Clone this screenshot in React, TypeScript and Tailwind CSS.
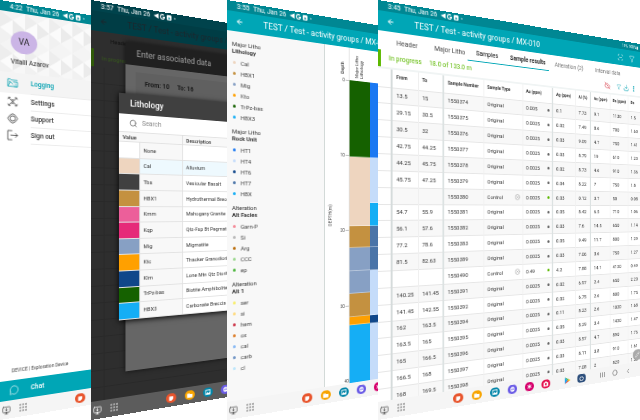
import React from 'react';
import {
  ArrowLeft, ChevronLeft, Circle, CloudOff, Download, Filter, MessageCircle,
  MonitorDown, MoreVertical, Pencil, Search, ScanLine, CircleX,
} from 'lucide-react';

type Tone = 'light' | 'dark';

function StatusBar({ time, tone = 'light' }: { time: string; tone?: Tone }) {
  return (
    <div className={`flex h-[10px] shrink-0 items-center pl-[10px] text-[7px] leading-[10px] text-white ${tone === 'dark' ? 'bg-[#00434c]' : 'bg-[#008793]'}`}>
      <span className="w-[17px]">{time}</span>
      <span className="mr-[4px] whitespace-nowrap">Thu, Jan 26</span>
      <svg viewBox="0 0 28 8" className="h-[8px] w-[26px] shrink-0" fill="#fff">
        <path d="M0 4 6 1v6z" />
        <path d="M12.500 2.200A2.600 2.600 0 1 0 13.300 4.400H11" fill="none" stroke="#fff" strokeWidth="1.300" />
        <rect x="16" y="1" width="6" height="6" rx="1" />
        <path d="M17.500 5.500 19 3l1.500 2.500z" fill="#008793" />
        <circle cx="26" cy="4" r=".8" />
      </svg>
    </div>
  );
}

function AppBar({ tone = 'light', children }: { tone?: Tone; children?: React.ReactNode }) {
  return (
    <header className={`flex h-5 shrink-0 items-center pr-[13px] ${tone === 'dark' ? 'bg-[#003d45] text-[#1d262c]' : 'bg-[#00a6b6] text-white'}`}>
      <button aria-label="Back" className="flex w-[38px] shrink-0 pl-[9px]">
        <ArrowLeft className="h-[8px] w-[8px]" strokeWidth={3} />
      </button>
      <h1 className="text-[9px] leading-5 whitespace-nowrap">TEST / Test - activity groups / MX-010</h1>
      {children}
    </header>
  );
}

const apps = [
  { name: 'Notes', color: 'bg-[#e8552d]', glyph: <path d="M4 3h5v3L7 8H4z" /> },
  { name: 'Files', color: 'bg-[#f7a400]', glyph: <path d="M3 3h3l1 1h3v4H3z" /> },
  { name: 'Gallery', color: 'bg-[#0084a8]', glyph: <path fillRule="evenodd" d="M3 2h7v6H3zM4 3v4l2-2 1 1 2-1V3z" /> },
  { name: 'Internet', color: 'bg-[#6a5be6]', glyph: <path fillRule="evenodd" d="M6.500 2a3 3 0 1 1 0 6 3 3 0 0 1 0-6zM4 4.500h5v1H4z" /> },
  { name: 'Flower', color: 'bg-[#d6006c]', glyph: <path d="M6 2h1v2l2-1 .500 1-2 1 2 1-.500 1-2-1v2H6V6L4 7l-.500-1 2-1-2-1L4 3l2 1z" /> },
  { name: 'Camera', color: 'bg-[#e4104e]', glyph: <path fillRule="evenodd" d="M3 3h2l.500-1h2L8 3h2v5H3zM6.500 4a1.300 1.300 0 1 0 0 2.600 1.300 1.300 0 0 0 0-2.600z" /> },
];

function NavBar({ tone = 'light' }: { tone?: Tone }) {
  return (
    <nav aria-label="System" className={`flex h-[18px] shrink-0 items-center pl-[2px] ${tone === 'dark' ? 'bg-[#5c5c5c] text-white' : 'bg-[#f5f5f5] text-[#555]'}`}>
      <button aria-label="Cast" className="w-[18px] shrink-0"><MonitorDown className="h-[9px] w-[9px]" strokeWidth={2} /></button>
      <button aria-label="All apps" className="w-[56px] shrink-0">
        <svg viewBox="0 0 8 8" className="h-[8px] w-[8px]" fill="currentColor">
          {[1, 4, 7].map((y) => [1, 4, 7].map((x) => <circle key={`${x}${y}`} cx={x} cy={y} r=".8" />))}
        </svg>
      </button>
      {apps.map((a) => (
        <div key={a.name} className="flex w-[22px] shrink-0 justify-center">
          <button aria-label={a.name} className={`h-[10px] w-[12px] rounded-[5px] ${a.color}`}>
            <svg viewBox="0 0 13 10" className="h-[10px] w-[12px]" fill="#fff">{a.glyph}</svg>
          </button>
        </div>
      ))}
      <button aria-label="Play Store" className="ml-[8px] flex w-[20px] shrink-0 justify-center">
        <svg viewBox="0 0 10 10" className="h-[10px] w-[10px]">
          <path d="M2 1v8l4-4z" fill="#20a6f5" /><path d="M2 1l6 3-2 1z" fill="#2fb457" />
          <path d="M2 9l6-3-2-1z" fill="#ea4335" /><path d="M7.500 3.700 10 5 7.500 6.300 6 5z" fill="#fbbc04" />
        </svg>
      </button>
      <button aria-label="Settings" className="flex w-[22px] shrink-0 justify-center">
        <span className="flex h-[10px] w-[12px] items-center justify-center rounded-[4px] bg-[#2d4f7c]">
          <span className="h-[5px] w-[6px] rounded-full border-[1px] border-white" />
        </span>
      </button>
      <button aria-label="Recents" className="ml-[9px] flex w-[20px] shrink-0 justify-center gap-[2px]">
        <i className="h-[6px] w-px bg-current" /><i className="h-[6px] w-px bg-current" /><i className="h-[6px] w-px bg-current" />
      </button>
      <button aria-label="Home" className="flex w-[20px] shrink-0 justify-center"><Circle className="h-[8px] w-[8px]" /></button>
      <button aria-label="Go back" className="flex w-[20px] shrink-0 justify-center"><ChevronLeft className="h-[9px] w-[9px]" /></button>
    </nav>
  );
}

/* A tablet screen that recedes to the right, clipped by its own column. */
function Tablet({ label, className, children }: { label: string; className: string; children: React.ReactNode }) {
  return (
    <section aria-label={label} className="h-full min-w-0 overflow-hidden bg-white perspective-[220px] perspective-origin-left">
      <div className={`relative flex h-full origin-left rotate-y-10 flex-col overflow-hidden ${className}`}>{children}</div>
    </section>
  );
}

const menu = [
  { label: 'Logging', active: true, icon: <path d="M1 10V2h3l1 1h7M1 10h11M1 10l3-5 3 3M7 5h5v5H8M9 7.500h1.500M3 4v2" /> },
  { label: 'Settings', active: false, icon: <path d="M2 2l9 8M11 2l-9 8M1 3.500 2 1.500l2 0M9 1.500h2l1 2M1 8.500l1 2h2M9 10.500h2l1-2M5 3.500l1.500 1L8 3.500M5 8.500l1.500-1L8 8.500" /> },
  { label: 'Support', active: false, icon: <path d="M6.500 3.200a3 2.800 0 1 0 0 5.600 3 2.800 0 0 0 0-5.600zM3.500 2.500 6.500.8l3 1.700L12.200 6 9.500 9.500l-3 1.700-3-1.700L.8 6z" /> },
  { label: 'Sign out', active: false, icon: <path d="M6 1H1v10h5M4 6h8M9.500 3.500 12 6 9.500 8.500" /> },
];

function MenuScreen() {
  return (
    <Tablet label="Menu" className="w-[130%] bg-white">
      <StatusBar time="4:22" />
      <div className="relative h-[61px] shrink-0 overflow-hidden bg-[#f4f4f4]">
        <svg aria-hidden="true" viewBox="0 0 120 61" preserveAspectRatio="xMinYMin slice" className="absolute inset-0 h-full w-full">
          <defs>
            <pattern id="cubes" width="26" height="34" patternUnits="userSpaceOnUse">
              <path d="M0 0 13 8 0 17z" fill="#ededed" /><path d="M26 0v17L13 8z" fill="#fafafa" />
              <path d="M0 17 13 8v17z" fill="#fbfbfb" /><path d="M13 25V8l13 9z" fill="#ebebeb" />
              <path d="M0 17l13 8L0 34z" fill="#f1f1f1" /><path d="M13 25l13 9V17z" fill="#f7f7f7" />
            </pattern>
          </defs>
          <rect width="120" height="61" fill="url(#cubes)" />
        </svg>
        <div className="relative pt-[18px] pl-[11px]">
          <div className="flex h-[23px] w-[28px] items-center justify-center rounded-[50%] bg-[#cbb5e6] text-[9px] text-[#222]">VA</div>
          <p className="text-[7px] leading-[18px] whitespace-nowrap text-[#222]">Vitalii Azarov</p>
        </div>
      </div>
      <ul>
        {menu.map(({ label, icon, active }) => (
          <li key={label} className={active ? 'bg-[#f4f4f4]' : ''}>
            <a href={`#${label}`} className={`flex items-center pl-[7px] text-[7px] font-medium ${active ? 'h-[21px] text-[#00a0b0]' : 'h-[17px] text-[#333]'}`}>
              <svg aria-hidden="true" viewBox="0 0 13 12" className="h-[11px] w-[12px]" fill="none" stroke="currentColor" strokeWidth=".8">{icon}</svg>
              <span className="ml-[13px] flex h-full flex-1 items-center border-b border-[#ececec]">{label}</span>
            </a>
          </li>
        ))}
      </ul>
      <p className="mt-auto pb-[6px] pl-[12px] text-[5px] leading-[8px] whitespace-nowrap text-[#444]">DEVICE | Exploration Device</p>
      <button className="flex h-[20px] shrink-0 items-center bg-[#00a6b6] pl-[9px] text-[7px] font-medium text-white">
        <MessageCircle className="mr-[12px] h-[10px] w-[11px]" strokeWidth={1.5} />Chat
      </button>
      <NavBar />
    </Tablet>
  );
}

const lithology = [
  ['bg-white', 'None', ''],
  ['bg-[#eed5bf]', 'Cal', 'Alluvium'],
  ['bg-[#404040]', 'Tbs', 'Vesicular Basalt'],
  ['bg-[#c49140]', 'HBX1', 'Hydrothermal Breccia'],
  ['bg-[#ec5f9a]', 'Kmm', 'Mahogany Granite'],
  ['bg-[#e62a79]', 'Kqp', 'Qtz-Fsp Bt Pegmatite'],
  ['bg-[#87a0c4]', 'Mig', 'Migmatite'],
  ['bg-[#ffa000]', 'Ktc', 'Thacker Granodiorite'],
  ['bg-[#10478a]', 'Klm', 'Lone Mtn Qtz Diorite'],
  ['bg-[#156100]', 'TrPz-bas', 'Biotite Amphibolite'],
  ['bg-[#15aef5]', 'HBX3', 'Carbonate Breccia'],
];

function PickerScreen() {
  return (
    <Tablet label="Lithology picker" className="w-[130%] bg-[#2e2e2e]">
      <StatusBar time="3:57" tone="dark" />
      <AppBar tone="dark" />
      <div className="relative min-h-0 flex-1 overflow-hidden">
        <p className="pl-[20px] text-[6px] leading-[18px] text-[#111]">Header</p>
        <p className="border-l-[3px] border-[#2f5a08] pl-[8px] text-[6px] leading-[18px] text-[#375a1c]">In progress</p>
        <div aria-hidden="true" className="grid h-full grid-cols-[14px_1fr] grid-rows-[repeat(20,17px)] *:border-r *:border-b *:border-[#292929]">
          {Array.from({ length: 40 }, (_, i) => <i key={i} />)}
        </div>
        <div role="dialog" aria-label="Enter associated data" className="absolute top-[7px] right-0 bottom-[26px] left-[36px] bg-[#666] text-[#bbb] shadow-[0_0_5px_#111]">
          <h2 className="h-[23px] bg-[#202020] pl-[12px] text-[9px] leading-[23px] whitespace-nowrap text-[#a5a5a5]">Enter associated data</h2>
          <p className="mt-[7px] ml-[11px] flex h-[24px] items-center gap-[9px] bg-[#606060] pl-[10px] text-[7px] font-bold text-[#181818]">
            <span>From: 10</span><span>To: 16</span>
          </p>
        </div>
        <div role="dialog" aria-label="Lithology" className="absolute top-[60px] right-0 left-[29px] bg-white text-[#333] shadow-[0_1px_6px_#000]">
          <h2 className="h-[21px] bg-[#404040] pl-[12px] text-[9px] leading-[21px] font-medium text-white">Lithology</h2>
          <label className="flex h-[18px] items-center pl-[11px]">
            <Search className="mr-[5px] h-[9px] w-[9px] text-[#333]" strokeWidth={1.5} />
            <input aria-label="Search" placeholder="Search" className="w-[80px] text-[7px] outline-none placeholder:text-[#888]" />
          </label>
          <table className="h-[194px] w-full table-fixed border-collapse text-left text-[6px] leading-[8px] whitespace-nowrap">
            <colgroup><col className="w-[22px]" /><col className="w-[49px]" /><col /></colgroup>
            <thead>
              <tr className="h-[10px] border-y border-[#e3e3e3] bg-[#f8f8f8]">
                <th colSpan={2} className="border-r border-[#ddd] pl-[4px] font-medium">Value</th>
                <th className="pl-[4px] font-medium">Description</th>
              </tr>
            </thead>
            <tbody>
              {lithology.map(([color, code, text]) => (
                <tr key={code} className={`border-b border-[#e3e3e3] ${code === 'Cal' ? 'bg-[#eef9fe]' : 'bg-white'}`}>
                  <td className={color} />
                  <td className={`border-x border-[#e0e0e0] pl-[4px] ${code === 'Cal' ? '' : 'bg-[#f8f8f8]'}`}>{code}</td>
                  <td className="pl-[4px]">{text}</td>
                </tr>
              ))}
            </tbody>
          </table>
        </div>
      </div>
      <NavBar tone="dark" />
    </Tablet>
  );
}

const legend = [
  { top: 'Major Litho', title: 'Lithology', items: [['Cal', 'bg-[#eed5bf]'], ['HBX1', 'bg-[#c49140]'], ['Mig', 'bg-[#87a0c4]'], ['Kto', 'bg-[#ffa000]'], ['TrPz-bas', 'bg-[#156100]'], ['HBX3', 'bg-[#15aef5]']] },
  { top: 'Major Litho', title: 'Rock Unit', items: [['HT1', 'bg-[#1a78f2]'], ['HT4', 'bg-[#c5dcfa]'], ['HT6', 'bg-[#10478a]'], ['HT7', 'bg-[#4a74a8]'], ['HBX', 'bg-[#15aef5]']] },
  { top: 'Alteration', title: 'Alt Facies', items: [['Garn-P', 'bg-[#f48a98]'], ['Si', 'bg-[#b8b8b8]'], ['Arg', 'bg-[#b96b08]'], ['CCC', 'bg-[#99d68c]'], ['ep', 'bg-[#4ab53a]']] },
  { top: 'Alteration', title: 'Alt 1', items: [['ser', 'bg-[#f8ee68]'], ['si', 'bg-[#ffd97a]'], ['hem', 'bg-[#cc3044]'], ['ox', 'bg-[#dc7b24]'], ['cal', 'bg-[#86b8f4]'], ['carb', 'bg-[#7094c4]'], ['cl', 'bg-[#bde6fb]']] },
];

function LogScreen() {
  return (
    <Tablet label="Lithology log" className="w-[135%] bg-white">
      <StatusBar time="3:55" />
      <AppBar />
      <div className="flex min-h-0 flex-1">
        <aside className="flex w-[108px] shrink-0 flex-col gap-[5px] border-r border-[#cfd6d4] bg-[#f8f8f8] pt-[9px] pl-[5px] text-[#333]">
          {legend.map((g) => (
            <section key={g.title}>
              <h2 className="mb-[3px] text-[6px] leading-[7px]"><span className="block">{g.top}</span><span className="block font-bold">{g.title}</span></h2>
              <ul>
                {g.items.map(([name, color]) => (
                  <li key={name} className="flex h-[11px] items-center gap-[5px] pl-px text-[6px] text-[#444]">
                    <i className={`h-[3px] w-[3px] rounded-full ${color}`} />{name}
                  </li>
                ))}
              </ul>
            </section>
          ))}
        </aside>
        <div className="flex w-[30px] shrink-0 border-r border-[#ddd] text-[5px] text-[#444]">
          <span className="w-[12px] rotate-180 self-center pr-[2px] leading-[8px] [writing-mode:vertical-rl]">DEPTH(m)</span>
          <div className="flex flex-1 flex-col items-end">
            <span className="mr-[4px] h-[34px] rotate-180 pt-[4px] text-[5px] leading-[7px] font-medium [writing-mode:vertical-rl]">Depth</span>
            {['0', '10', '20', '30'].map((t) => (
              <span key={t} className="flex h-[84px] w-full items-start justify-end leading-[5px]">{t}<i className="mt-[2px] ml-px h-px w-[4px] bg-[#bbb]" /></span>
            ))}
            <span className="leading-[5px]">40</span>
          </div>
        </div>
        <div className="flex min-w-0 flex-1 flex-col">
          <div className="flex h-[36px] shrink-0 items-end pb-[3px] pl-[6px]">
            <span className="rotate-180 text-[5px] leading-[6px] text-[#333] [writing-mode:vertical-rl]">Major Litho<br />Lithology</span>
          </div>
          <div className="flex min-h-0 flex-1">
            <div className="flex w-[26px] flex-col divide-y divide-white/40">
              <i className="h-[85px] bg-[#156100]" />
              <i className="h-[77px] bg-[#eed5bf]" />
              <i className="h-[24px] bg-[#c49140]" />
              <i className="h-[26px] bg-[#87a0c4]" />
              <i className="h-[25px] bg-[#87a0c4]" />
              <i className="h-[26px] bg-[#c49140]" />
              <i className="h-[9px] bg-[#ffa000]" />
              <i className="flex-1 bg-[#15aef5]" />
            </div>
            <div className="flex flex-1 flex-col divide-y divide-white/40">
              <i className="h-[85px] bg-[#1a78f2]" />
              <i className="h-[51px] bg-[#c5dcfa]" />
              <i className="h-[26px] bg-[#15aef5]" />
              <i className="h-[24px] bg-[#4a74a8]" />
              <i className="h-[26px] bg-[#4a74a8]" />
              <i className="h-[51px] bg-[#c5dcfa]" />
              <i className="h-[9px] bg-[#10478a]" />
              <i className="flex-1 bg-[#c5dcfa]" />
            </div>
          </div>
        </div>
      </div>
      <NavBar />
    </Tablet>
  );
}

const tabs = [
  ['Header', 'w-[41px] pl-[1px] text-[#444]'],
  ['Major Litho', 'w-[39px] pl-[1px] text-[#444]'],
  ['Samples', 'w-[47px] border-b border-[#00a6b6] pl-[10px]'],
  ['Sample results', 'w-[56px] border-b border-[#00a6b6] pl-[5px] font-medium'],
  ['Alteration  (2)', 'w-[66px] pl-[8px] text-[#777]'],
  ['Interval data', 'flex-1 text-[#777]'],
];

const samples = [
  ['13.5', '15', '1550374', 'Original', '0.005', '0.1', '7.73', '9.1', '1130', '1.5'],
  ['29.15', '30.5', '1550375', 'Original', '0.0025', '0.02', '7.49', '8.6', '700', '1.60'],
  ['30.5', '32', '1550376', 'Original', '0.0025', '0.03', '9.09', '4.7', '750', '1.41'],
  ['42.75', '44.25', '1550377', 'Original', '0.0025', '0.03', '8.79', '19', '610', '1.23'],
  ['44.25', '45.75', '1550378', 'Original', '0.0025', '0.02', '8.73', '4.6', '910', '1.36'],
  ['45.75', '47.25', '1550379', 'Original', '0.0025', '0.04', '8.22', '7', '750', '1.8'],
  ['', '', '1550380', 'Control', '0.0025', '0.03', '0.12', '3.7', '50', '0.08'],
  ['54.7', '55.9', '1550381', 'Original', '0.0025', '0.05', '8.42', '6.5', '710', '1.06'],
  ['56.1', '57.6', '1550382', 'Original', '0.0025', '0.03', '7.6', '14.5', '650', '1.14'],
  ['77.2', '78.6', '1550383', 'Original', '0.0025', '0.05', '9.49', '11.7', '800', '1.29'],
  ['81.5', '82.63', '1550389', 'Original', '0.0025', '0.03', '7.06', '3.6', '750', '1.27'],
  ['', '', '1550490', 'Control', '0.49', '4.2', '7.88', '14.1', '4120', '0.49'],
  ['140.25', '141.45', '1550391', 'Original', '0.0025', '0.02', '6.97', '2.4', '650', '2.20'],
  ['141.45', '142.55', '1550392', 'Original', '0.0025', '0.02', '6.75', '2.6', '800', '1.75'],
  ['162', '163.5', '1550394', 'Original', '0.0025', '0.11', '8.23', '2.6', '1020', '1.68'],
  ['163.5', '165', '1550395', 'Original', '0.0025', '0.05', '8.29', '3.4', '1420', '1.47'],
  ['165', '166.5', '1550396', 'Original', '0.0025', '0.03', '8.57', '4.7', '890', '1.76'],
  ['166.5', '168', '1550397', 'Original', '0.0025', '0.03', '8.11', '3.8', '910', '1.61'],
  ['168', '169.5', '1550398', 'Original', '0.0025', '0.03', '7.08', '2', '820', '1.52'],
];

const heads = ['From', 'To', 'Sample Number', 'Sample Type', 'Au (ppm)', 'Ag (ppm)', 'Al (%)', 'As (ppm)', 'Ba (ppm)', 'Be'];

function SamplesScreen() {
  return (
    <Tablet label="Samples" className="w-[130%] bg-white">
      <div className="flex shrink-0 bg-[#008793]">
        <div className="flex-1"><StatusBar time="3:45" /></div>
        <span className="pr-[7px] text-[5px] leading-[10px] text-white">19% 100%▮</span>
      </div>
      <AppBar>
        <button aria-label="Scan" className="ml-auto"><ScanLine className="h-[9px] w-[9px]" strokeWidth={1.5} /></button>
        <button aria-label="Filter" className="ml-[9px]"><Filter className="h-[9px] w-[9px]" strokeWidth={1.5} /></button>
      </AppBar>
      <div role="tablist" className="flex h-[19px] shrink-0 pl-[18px]">
        {tabs.map(([name, cls]) => (
          <button key={name} role="tab" className={`shrink-0 pt-[3px] text-left text-[7px] whitespace-nowrap ${cls}`}>{name}</button>
        ))}
      </div>
      <div className="flex h-[19px] shrink-0 items-center border-b-2 border-[#f0f4f4] text-[#5cb800]">
        <i className="mr-[8px] h-[17px] w-[3px] bg-[#5cb800]" />
        <p className="flex gap-[8px] text-[7px] whitespace-nowrap"><span>In progress</span><span>18.0 of 133.0 m</span></p>
        <div className="ml-auto flex items-center gap-[3px] pr-[10px] text-[#00a0b0]">
          <button aria-label="Offline"><CloudOff className="mr-[6px] h-[9px] w-[9px] text-[#d8434f]" /></button>
          <button aria-label="Edit filter"><Filter className="h-[7px] w-[8px]" strokeWidth={1.5} /></button>
          <button aria-label="Download"><Download className="h-[9px] w-[9px]" /></button>
          <button aria-label="More"><MoreVertical className="h-[9px] w-[9px]" strokeWidth={3} /></button>
        </div>
      </div>
      <div className="min-h-0 flex-1 overflow-hidden">
        <table className="h-[339px] w-full table-fixed border-collapse text-left text-[6px] leading-[8px] whitespace-nowrap text-[#333]">
          <colgroup>
            <col className="w-[14px]" /><col className="w-[28px]" /><col className="w-[28px]" /><col className="w-[47px]" />
            <col className="w-[49px]" /><col className="w-[40px]" /><col className="w-[32px]" /><col className="w-[22px]" />
            <col className="w-[29px]" /><col className="w-[28px]" /><col />
          </colgroup>
          <thead>
            <tr className="h-[18px] border-b border-[#e6e6e6] align-top text-[5px]">
              <td className="border-r-2 border-[#d5dbdb]" />
              {heads.map((h, i) => (
                <th key={h} className={`pt-[3px] pl-[4px] font-bold ${i === 1 || i === 4 || i === 6 ? 'border-r-2 border-[#dce2e2]' : 'border-r border-[#f0f0f0]'}`}>{h}</th>
              ))}
            </tr>
          </thead>
          <tbody>
            {samples.map((row) => (
              <tr key={row[2]} className="border-b border-[#e6e6e6] odd:bg-[#f8f8f8]">
                <td className="border-r-2 border-[#d5dbdb] bg-white" />
                {row.map((cell, i) => (
                  <td key={i} className={`pl-[4px] ${i === 1 || i === 4 || i === 6 ? 'border-r-2 border-[#dce2e2]' : 'border-r border-[#f0f0f0]'}`}>
                    <span className="flex items-center justify-between pr-[3px]">
                      {cell}
                      {i === 3 && cell === 'Control' && <CircleX className="h-[7px] w-[7px] text-[#999]" />}
                      {i === 4 && <i className={`h-[3px] w-[3px] rounded-full ${row[3] === 'Control' ? 'bg-[#5cb800]' : 'bg-[#666]'}`} />}
                    </span>
                  </td>
                ))}
              </tr>
            ))}
          </tbody>
        </table>
      </div>
      <button aria-label="Edit" className="absolute right-0 bottom-[21px] flex h-[13px] w-[16px] items-center justify-center rounded-full bg-[#aaa] text-white"><Pencil className="h-[7px] w-[7px]" /></button>
      <NavBar />
    </Tablet>
  );
}

export default function App() {
  return (
    <main className="grid h-dvh w-full grid-cols-[91fr_136fr_151fr_262fr] overflow-hidden bg-white font-['Roboto','Liberation_Sans',sans-serif]">
      <MenuScreen />
      <PickerScreen />
      <LogScreen />
      <SamplesScreen />
    </main>
  );
}
